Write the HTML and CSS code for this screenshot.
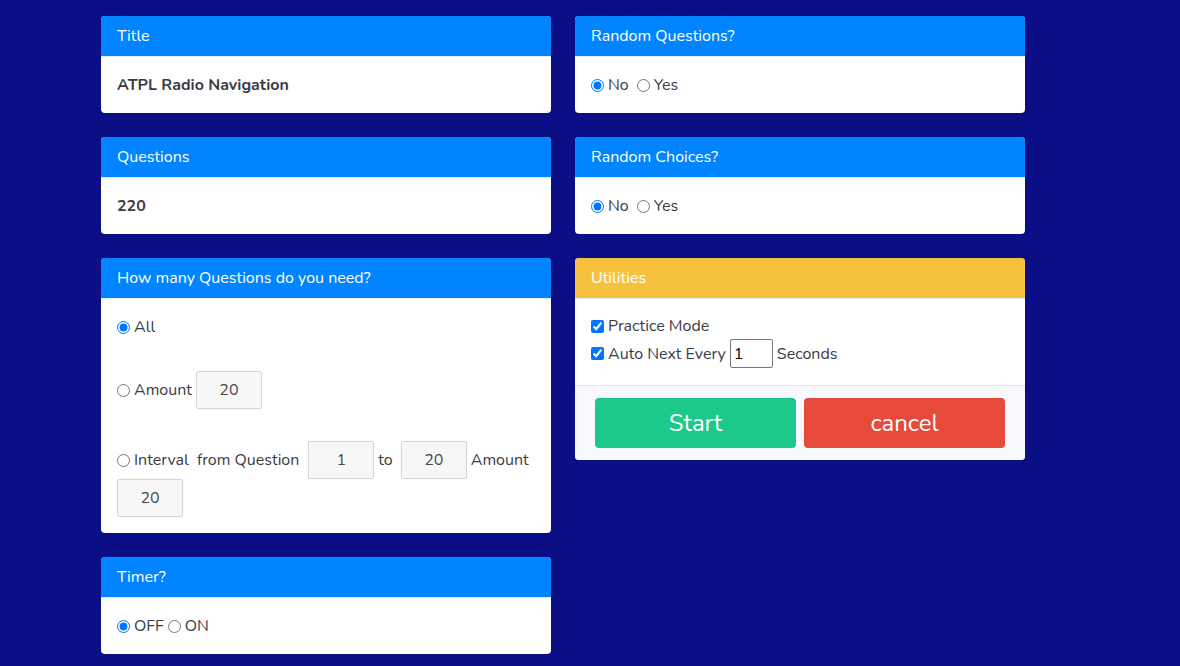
FILE: index.html
```html
<!DOCTYPE html>
<html>
<head>
<meta charset="utf-8">
<link rel="stylesheet" href="styles.css">
</head>
<body>
<div class="layout">
  <div class="col">
    <div class="card">
      <div class="card-header">Title</div>
      <div class="card-body"><b class="strong">ATPL Radio Navigation</b></div>
    </div>
    <div class="card">
      <div class="card-header">Questions</div>
      <div class="card-body"><b class="strong">220</b></div>
    </div>
    <div class="card">
      <div class="card-header">How many Questions do you need?</div>
      <div class="card-body stack">
        <div class="row"><label class="opt"><input type="radio" name="qn" checked>All</label></div>
        <div class="row"><label class="opt"><input type="radio" name="qn">Amount</label><input class="num" type="text" value="20"></div>
        <div class="row"><label class="opt"><input type="radio" name="qn">Interval</label><span class="txt">&nbsp;from Question</span><input class="num gapl" type="text" value="1"><span class="txt">to</span><input class="num gapm" type="text" value="20"><span class="txt">Amount</span><input class="num" type="text" value="20"></div>
      </div>
    </div>
    <div class="card">
      <div class="card-header">Timer?</div>
      <div class="card-body flat"><label class="opt sm"><input type="radio" name="tm" checked>OFF</label><label class="opt"><input type="radio" name="tm">ON</label></div>
    </div>
  </div>
  <div class="col">
    <div class="card">
      <div class="card-header">Random Questions?</div>
      <div class="card-body flat"><label class="opt sp"><input type="radio" name="rq" checked>No</label><label class="opt"><input type="radio" name="rq">Yes</label></div>
    </div>
    <div class="card">
      <div class="card-header">Random Choices?</div>
      <div class="card-body flat"><label class="opt sp"><input type="radio" name="rc" checked>No</label><label class="opt"><input type="radio" name="rc">Yes</label></div>
    </div>
    <div class="card">
      <div class="card-header warn">Utilities</div>
      <div class="card-body util">
        <div class="line"><label class="opt"><input type="checkbox" checked>Practice Mode</label></div>
        <div class="line"><label class="opt"><input type="checkbox" checked>Auto Next Every</label><input class="sec" type="text" value="1"><span class="txt">Seconds</span></div>
      </div>
      <div class="card-footer">
        <button class="btn start">Start</button>
        <button class="btn cancel">cancel</button>
      </div>
    </div>
  </div>
</div>
</body>
</html>
```
FILE: styles.css
```css
html, body {
  margin: 0;
  padding: 0;
  background: #0b0e84;
  font-family: "Nunito", "Lato", "Open Sans", sans-serif;
  font-size: 16px;
  color: #3a3b45;
}
.layout {
  display: grid;
  grid-template-columns: 450px 450px;
  column-gap: 24px;
  padding: 16px 0 0 101px;
  align-items: start;
}
.col {
  display: flex;
  flex-direction: column;
  gap: 24px;
}
.card {
  background: #fff;
  border-radius: 4px;
  overflow: hidden;
}
.card-header {
  background: #0084ff;
  color: #fff;
  height: 41px;
  line-height: 40px;
  padding: 0 16px;
  border-bottom: 1px solid #e3ecf7;
  box-sizing: border-box;
}
.card-header.warn {
  background: #f6c23e;
}
.card-body {
  padding: 16px;
  line-height: 24px;
}
.card-body.flat {
  display: flex;
  align-items: center;
  height: 24px;
}
.strong {
  font-weight: 700;
  color: #3a3b45;
}
.opt {
  display: inline-flex;
  align-items: center;
  height: 24px;
}
.opt input {
  margin: 0 4px 0 0;
  width: 13px;
  height: 13px;
}
.opt.sp {
  margin-right: 8px;
}
.opt.sm {
  margin-right: 4px;
}
.stack {
  display: flex;
  flex-direction: column;
  gap: 32px;
}
.row {
  display: flex;
  flex-wrap: wrap;
  align-items: center;
  column-gap: 4px;
}
.txt {
  white-space: pre;
}
.gapl {
  margin-left: 5px;
}
.gapm {
  margin-left: 4px;
}
.num {
  width: 66px;
  height: 38px;
  box-sizing: border-box;
  background: #f7f7f7;
  border: 1px solid #d4d4d4;
  border-radius: 2px;
  text-align: center;
  font-family: inherit;
  font-size: 16px;
  color: #4a4a4a;
  padding: 0;
}
.util {
  padding: 15px 16px 17px;
}
.line {
  display: flex;
  align-items: center;
  gap: 4px;
}
.line + .line {
  margin-top: 1px;
}
.sec {
  width: 43px;
  height: 29px;
  box-sizing: border-box;
  border: 1px solid #767676;
  border-radius: 2px;
  padding: 0 3px;
  font-family: inherit;
  font-size: 16px;
  color: #000;
}
.card-footer {
  background: #f8f9fc;
  border-top: 1px solid #e3e6f0;
  padding: 12px 20px;
  display: flex;
  gap: 8px;
}
.btn {
  flex: 1;
  height: 50px;
  border: none;
  border-radius: 4px;
  color: #fff;
  font-family: inherit;
  font-size: 24px;
}
.start {
  background: #1cc88a;
}
.cancel {
  background: #e74a3b;
}
```
